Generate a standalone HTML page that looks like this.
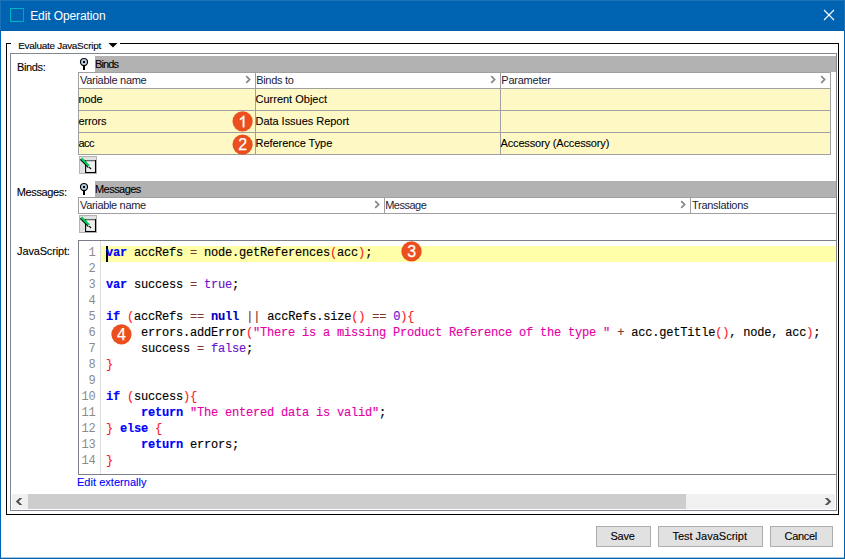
<!DOCTYPE html>
<html>
<head>
<meta charset="utf-8">
<title>Edit Operation</title>
<style>
html,body{margin:0;padding:0;}
body{width:845px;height:559px;position:relative;overflow:hidden;background:#fff;font-family:"Liberation Sans",sans-serif;font-size:11px;color:#000;}
div,span{position:absolute;box-sizing:border-box;white-space:nowrap;}
.t{line-height:14px;height:14px;-webkit-text-stroke:0.1px;}
.h{color:#1b1b3a;-webkit-text-stroke:0;}
.bar{background:#b2b2b2;left:95px;width:741px;height:16px;}
.ln{background:#a0a0a0;}
.yl{background:#fef8c5;}
.code{font-family:"Liberation Mono",monospace;font-size:12px;letter-spacing:-0.2px;line-height:16px;height:16px;left:106px;margin-top:-1px;white-space:pre;color:#000;-webkit-text-stroke:0.15px;}
.code span{position:static;}
.num{font-family:"Liberation Mono",monospace;font-size:12px;letter-spacing:-0.2px;line-height:16px;height:16px;left:79px;width:16.4px;margin-top:-1px;text-align:right;color:#8a8a8a;}
.k{color:#0000ff;font-weight:bold;}
.n{color:#0000c0;font-weight:bold;}
.b{color:#ff1a28;}
.o{color:#7c3828;}
.v{color:#6c14cc;}
.s{color:#e400a6;}
.circ{width:20.2px;height:20.2px;border-radius:50%;background:#ea4f1d;color:#fff;font-size:16px;line-height:20.6px;text-align:center;-webkit-text-stroke:0.3px #fff;}
.btn{top:526px;height:21px;background:#e1e1e1;border:1px solid #adadad;}
.ico{width:18px;height:18px;left:79px;}
</style>
</head>
<body>
<!-- title bar -->
<div style="left:0;top:0;width:845px;height:31px;background:#0063b1;"></div>
<div style="left:0;top:0;width:845px;height:1px;background:#1a72b8;"></div>
<div style="left:10px;top:8px;width:14px;height:14px;border:1px solid #00b4c4;border-right-color:#0a9cc0;"></div>
<span class="t" id="title" style="left:30.2px;top:9px;font-size:12px;color:#fff;letter-spacing:-0.1px;-webkit-text-stroke:0;">Edit Operation</span>
<svg style="position:absolute;left:823px;top:9px;" width="12" height="12" viewBox="0 0 12 12"><path d="M1 1 L11 11 M11 1 L1 11" stroke="#fff" stroke-width="1.1" fill="none"/></svg>
<!-- window borders -->
<div style="left:0;top:0;width:1px;height:31px;background:#1a72b8;"></div>
<div style="left:844px;top:0;width:1px;height:31px;background:#1a72b8;"></div>
<div style="left:0;top:30px;width:845px;height:1px;background:#005aa8;"></div>
<div style="left:0;top:31px;width:1px;height:528px;background:#0063b1;"></div>
<div style="left:844px;top:31px;width:1px;height:528px;background:#0063b1;"></div>
<div style="left:0;top:558px;width:845px;height:1px;background:#0063b1;"></div>
<div style="left:1px;top:557px;width:843px;height:1px;background:rgba(0,99,177,0.35);"></div>

<!-- outer group border (black) -->
<div style="left:6px;top:43px;width:1px;height:472px;background:#000;"></div>
<div style="left:838px;top:43px;width:1px;height:472px;background:#000;"></div>
<div style="left:6px;top:514px;width:833px;height:1px;background:#000;"></div>
<div style="left:6px;top:43px;width:5px;height:1px;background:#000;"></div>
<div style="left:120px;top:43px;width:719px;height:1px;background:#000;"></div>
<span class="t" id="grp" style="left:18.2px;top:39px;font-size:10px;letter-spacing:-0.3px;transform:scaleY(0.92);transform-origin:0 10.5px;">Evaluate JavaScript</span>
<svg style="position:absolute;left:108px;top:43px;" width="10" height="5" viewBox="0 0 10 5"><path d="M0.5 0 L9.5 0 L5 4.6 Z" fill="#000"/></svg>
<!-- inner border (gray) -->
<div style="left:10px;top:53px;width:827px;height:458px;border:1px solid #828790;"></div>

<!-- labels -->
<span class="t" id="l1" style="left:17px;top:60px;letter-spacing:-0.36px;">Binds:</span>
<span class="t" id="l2" style="left:16.7px;top:185px;letter-spacing:-0.363px;">Messages:</span>
<span class="t" id="l3" style="left:17.1px;top:244px;letter-spacing:-0.16px;">JavaScript:</span>

<!-- Binds section -->
<div class="bar" style="top:56px;"></div>
<span class="t" id="b0" style="left:95px;top:57px;letter-spacing:-0.9px;">Binds</span>
<svg style="position:absolute;left:79px;top:57px;" width="10" height="14" viewBox="0 0 10 14"><circle cx="5" cy="5" r="3.55" fill="#b9cde2" stroke="#000" stroke-width="1.15"/><rect x="4" y="4" width="2" height="2" fill="#000"/><rect x="4" y="9" width="2" height="4" fill="#000"/></svg>

<div style="left:79px;top:73px;width:751px;height:15px;background:#fff;"></div>
<div class="yl" style="left:79px;top:89px;width:751px;height:65px;"></div>
<div class="ln" style="left:78px;top:72px;width:753px;height:1px;"></div>
<div class="ln" style="left:78px;top:88px;width:753px;height:1px;"></div>
<div class="ln" style="left:78px;top:110px;width:753px;height:1px;"></div>
<div class="ln" style="left:78px;top:132px;width:753px;height:1px;"></div>
<div class="ln" style="left:78px;top:154px;width:753px;height:1px;"></div>
<div class="ln" style="left:78px;top:72px;width:1px;height:83px;"></div>
<div class="ln" style="left:255px;top:72px;width:1px;height:83px;"></div>
<div class="ln" style="left:500px;top:72px;width:1px;height:83px;"></div>
<div class="ln" style="left:830px;top:72px;width:1px;height:83px;"></div>

<span class="t h" id="h1" style="left:80px;top:73px;letter-spacing:-0.283px;">Variable name</span>
<span class="t h" id="h2" style="left:256.2px;top:73px;letter-spacing:-0.3px;">Binds to</span>
<span class="t h" id="h3" style="left:501.3px;top:73px;letter-spacing:-0.23px;">Parameter</span>
<svg style="position:absolute;left:245px;top:75px;" width="7" height="9" viewBox="0 0 7 9"><path d="M1.2 1.2 L4.6 4.5 L1.2 7.8" stroke="#858585" stroke-width="1.7" fill="none"/></svg>
<svg style="position:absolute;left:490px;top:75px;" width="7" height="9" viewBox="0 0 7 9"><path d="M1.2 1.2 L4.6 4.5 L1.2 7.8" stroke="#858585" stroke-width="1.7" fill="none"/></svg>
<svg style="position:absolute;left:820px;top:75px;" width="7" height="9" viewBox="0 0 7 9"><path d="M1.2 1.2 L4.6 4.5 L1.2 7.8" stroke="#858585" stroke-width="1.7" fill="none"/></svg>

<span class="t" id="c11" style="left:78.6px;top:92px;letter-spacing:-0.13px;">node</span>
<span class="t" id="c12" style="left:255.5px;top:92px;">Current Object</span>
<span class="t" id="c21" style="left:78.6px;top:114px;letter-spacing:-0.14px;">errors</span>
<span class="t" id="c22" style="left:255.5px;top:114px;letter-spacing:-0.035px;">Data Issues Report</span>
<span class="t" id="c31" style="left:78.6px;top:136px;letter-spacing:-0.6px;">acc</span>
<span class="t" id="c32" style="left:255.5px;top:136px;letter-spacing:-0.054px;">Reference Type</span>
<span class="t" id="c33" style="left:500.5px;top:136px;letter-spacing:-0.15px;">Accessory (Accessory)</span>

<svg style="position:absolute;left:0;top:0;" width="845" height="559"><circle cx="242.6" cy="121.45" r="10.1" fill="#ea4f1d"/><path transform="translate(238.25 127.25) scale(0.0078125 -0.0078125)" fill="#fff" stroke="#fff" stroke-width="60" d="M763 0H583V1147Q518 1085 412.5 1023T223 930V1104Q373 1174.5 485 1275T644 1470H763Z"/></svg>
<svg style="position:absolute;left:0;top:0;" width="845" height="559"><circle cx="242.6" cy="144.6" r="10.1" fill="#ea4f1d"/><text x="242.7" y="150.4" style="font-family:'Liberation Sans',sans-serif" font-size="16" fill="#fff" stroke="#fff" stroke-width="0.25" text-anchor="middle">2</text></svg>

<!-- edit icon 1 -->
<svg class="ico" style="position:absolute;top:156px;" width="18" height="18" viewBox="0 0 18 18"><rect x="0.5" y="0.5" width="17" height="17" fill="#e1e1e1" stroke="#b4b4b4"/><rect x="6.6" y="4.6" width="9.9" height="11.9" fill="#f0f0f0" stroke="#000" stroke-width="1.1"/><path d="M7 4.5 H16" stroke="#666" stroke-width="1"/><path d="M1.4 3.2 L9.6 11.4" stroke="#000" stroke-width="1.6"/><path d="M2.4 2.4 L10.2 10.2" stroke="#0c5" stroke-width="2.3"/><path d="M9.7 10.1 L10.6 11" stroke="#fff" stroke-width="1.4"/><path d="M10.2 11.2 L12 13" stroke="#000" stroke-width="1.2"/></svg>

<!-- Messages section -->
<div class="bar" style="top:181px;"></div>
<span class="t" id="m0" style="left:95px;top:182px;letter-spacing:-0.543px;">Messages</span>
<svg style="position:absolute;left:79px;top:182px;" width="10" height="14" viewBox="0 0 10 14"><circle cx="5" cy="5" r="3.55" fill="#b9cde2" stroke="#000" stroke-width="1.15"/><rect x="4" y="4" width="2" height="2" fill="#000"/><rect x="4" y="9" width="2" height="4" fill="#000"/></svg>
<div class="ln" style="left:78px;top:197px;width:758px;height:1px;"></div>
<div class="ln" style="left:78px;top:213px;width:758px;height:1px;"></div>
<div class="ln" style="left:78px;top:197px;width:1px;height:17px;"></div>
<div class="ln" style="left:384px;top:197px;width:1px;height:17px;"></div>
<div class="ln" style="left:690px;top:197px;width:1px;height:17px;"></div>
<span class="t h" id="mh1" style="left:80px;top:198px;letter-spacing:-0.333px;">Variable name</span>
<span class="t h" id="mh2" style="left:385.2px;top:198px;letter-spacing:-0.5px;">Message</span>
<span class="t h" id="mh3" style="left:692px;top:198px;letter-spacing:-0.273px;">Translations</span>
<svg style="position:absolute;left:374px;top:200px;" width="7" height="9" viewBox="0 0 7 9"><path d="M1.2 1.2 L4.6 4.5 L1.2 7.8" stroke="#858585" stroke-width="1.7" fill="none"/></svg>
<svg style="position:absolute;left:680px;top:200px;" width="7" height="9" viewBox="0 0 7 9"><path d="M1.2 1.2 L4.6 4.5 L1.2 7.8" stroke="#858585" stroke-width="1.7" fill="none"/></svg>

<!-- edit icon 2 -->
<svg class="ico" style="position:absolute;top:215px;" width="18" height="18" viewBox="0 0 18 18"><rect x="0.5" y="0.5" width="17" height="17" fill="#e1e1e1" stroke="#b4b4b4"/><rect x="6.6" y="4.6" width="9.9" height="11.9" fill="#f0f0f0" stroke="#000" stroke-width="1.1"/><path d="M7 4.5 H16" stroke="#666" stroke-width="1"/><path d="M1.4 3.2 L9.6 11.4" stroke="#000" stroke-width="1.6"/><path d="M2.4 2.4 L10.2 10.2" stroke="#0c5" stroke-width="2.3"/><path d="M9.7 10.1 L10.6 11" stroke="#fff" stroke-width="1.4"/><path d="M10.2 11.2 L12 13" stroke="#000" stroke-width="1.2"/></svg>

<!-- code editor -->
<div style="left:78px;top:240px;width:758px;height:1px;background:#7a7f88;"></div>
<div style="left:78px;top:474px;width:758px;height:1px;background:#7a7f88;"></div>
<div style="left:78px;top:240px;width:1px;height:235px;background:#7a7f88;"></div>
<div style="left:100px;top:241px;width:1px;height:233px;background:#dcdcdc;"></div>
<div style="left:101px;top:246px;width:735px;height:16px;background:#ffffaa;"></div>
<div style="left:106px;top:246px;width:2px;height:16px;background:#000;"></div>

<span class="num" style="top:246px;">1</span>
<span class="num" style="top:262px;">2</span>
<span class="num" style="top:278px;">3</span>
<span class="num" style="top:294px;">4</span>
<span class="num" style="top:310px;">5</span>
<span class="num" style="top:326px;">6</span>
<span class="num" style="top:342px;">7</span>
<span class="num" style="top:358px;">8</span>
<span class="num" style="top:374px;">9</span>
<span class="num" style="top:390px;">10</span>
<span class="num" style="top:406px;">11</span>
<span class="num" style="top:422px;">12</span>
<span class="num" style="top:438px;">13</span>
<span class="num" style="top:454px;">14</span>

<span class="code" style="top:246px;"><span class="k">var</span> accRefs <span class="o">=</span> node.getReferences<span class="b">(</span>acc<span class="b">)</span>;</span>
<span class="code" style="top:278px;"><span class="k">var</span> success <span class="o">=</span> <span class="v">true</span>;</span>
<span class="code" style="top:310px;"><span class="k">if</span> <span class="b">(</span>accRefs <span class="o">==</span> <span class="n">null</span> <span class="o">||</span> accRefs.size<span class="b">()</span> <span class="o">==</span> <span class="v">0</span><span class="b">){</span></span>
<span class="code" style="top:326px;">     errors.addError<span class="b">(</span><span class="s">"There is a missing Product Reference of the type "</span> <span class="o">+</span> acc.getTitle<span class="b">()</span>, node, acc<span class="b">)</span>;</span>
<span class="code" style="top:342px;">     success <span class="o">=</span> <span class="v">false</span>;</span>
<span class="code" style="top:358px;"><span class="b">}</span></span>
<span class="code" style="top:390px;"><span class="k">if</span> <span class="b">(</span>success<span class="b">){</span></span>
<span class="code" style="top:406px;">     <span class="k">return</span> <span class="s">"The entered data is valid"</span>;</span>
<span class="code" style="top:422px;"><span class="b">}</span> <span class="k">else</span> <span class="b">{</span></span>
<span class="code" style="top:438px;">     <span class="k">return</span> errors;</span>
<span class="code" style="top:454px;"><span class="b">}</span></span>

<svg style="position:absolute;left:0;top:0;" width="845" height="559"><circle cx="411.5" cy="251.4" r="10.1" fill="#ea4f1d"/><text x="411.6" y="257.2" style="font-family:'Liberation Sans',sans-serif" font-size="16" fill="#fff" stroke="#fff" stroke-width="0.25" text-anchor="middle">3</text></svg>
<svg style="position:absolute;left:0;top:0;" width="845" height="559"><circle cx="121.45" cy="334.3" r="10.1" fill="#ea4f1d"/><text x="121.55" y="340.1" style="font-family:'Liberation Sans',sans-serif" font-size="16" fill="#fff" stroke="#fff" stroke-width="0.25" text-anchor="middle">4</text></svg>

<span class="t" id="ext" style="left:77px;top:475px;color:#0000ff;letter-spacing:0.03px;">Edit externally</span>

<!-- scrollbar -->
<div style="left:12px;top:494px;width:823px;height:15px;background:#f0f0f0;"></div>
<div style="left:28px;top:494px;width:658px;height:15px;background:#cdcdcd;"></div>
<svg style="position:absolute;left:0;top:0;" width="845" height="559"><polygon points="15.8,501.5 19.5,498 22.3,498 18.7,501.5 22.3,505 19.5,505" fill="#505050"/><polygon points="831.3,501.5 827.6,498 824.8,498 828.4,501.5 824.8,505 827.6,505" fill="#505050"/></svg>

<!-- buttons -->
<div class="btn" style="left:596px;width:55px;"></div><span class="t" id="bt1" style="left:610.5px;top:529px;letter-spacing:-0.267px;">Save</span>
<div class="btn" style="left:658px;width:105px;"></div><span class="t" id="bt2" style="left:672.4px;top:529px;">Test JavaScript</span>
<div class="btn" style="left:770px;width:63px;"></div><span class="t" id="bt3" style="left:784.6px;top:529px;letter-spacing:-0.34px;">Cancel</span>
</body>
</html>
